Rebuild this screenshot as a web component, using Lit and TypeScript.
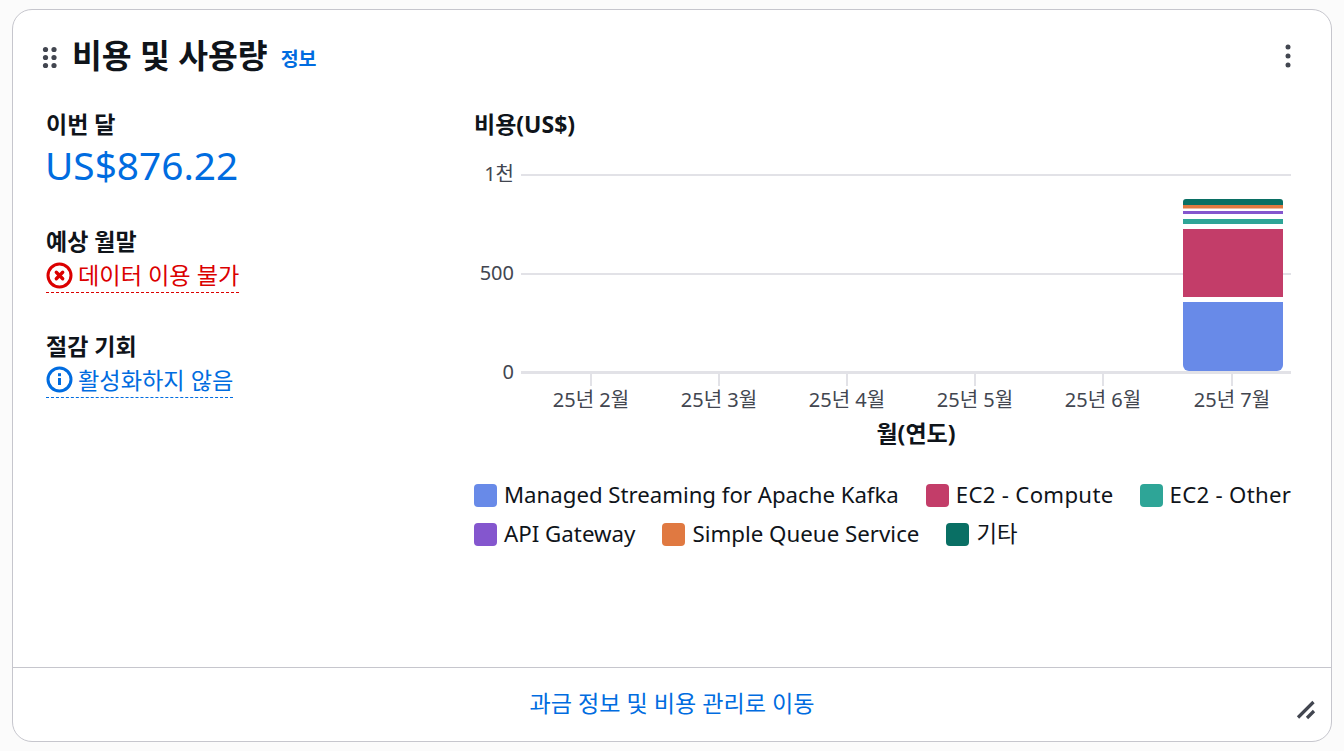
import { LitElement, html, css, svg } from "lit";
import { customElement } from "lit/decorators.js";

const months = [
  ["25년 2월", 591],
  ["25년 3월", 719],
  ["25년 4월", 847],
  ["25년 5월", 975],
  ["25년 6월", 1103],
  ["25년 7월", 1232],
] as const;

const legend = [
  [["Managed Streaming for Apache Kafka", "#688ae8"], ["EC2 - Compute", "#c33d69"], ["EC2 - Other", "#2ea597"]],
  [["API Gateway", "#8456ce"], ["Simple Queue Service", "#e07941"], ["기타", "#096f64"]],
];

@customElement("app-root")
export class AppRoot extends LitElement {
  static styles = css`
    :host {
      display: block;
      width: 1344px;
      height: 751px;
      box-sizing: border-box;
      padding: 9px 12px 9px 12px;
      background: #fbfbfb;
      font-family: "Noto Sans", "Noto Sans CJK KR", sans-serif;
      color: #0f141a;
    }
    .card {
      height: 733px;
      box-sizing: border-box;
      background: #fff;
      border: 1px solid #c6c6cd;
      border-radius: 20px;
      display: flex;
      flex-direction: column;
    }
    .header {
      height: 85px;
      box-sizing: border-box;
      display: flex;
      align-items: flex-start;
      padding: 24px 40px 0 29px;
    }
    .drag { width: 16px; height: 24px; margin-top: 12px; flex: none; }
    h2 {
      margin: 0 0 0 14px;
      font-size: 32.4px;
      line-height: 42px;
      font-weight: 700;
    }
    .info {
      margin: 11px 0 0 13px;
      font-size: 19.5px;
      line-height: 28px;
      font-weight: 700;
      color: #006ce0;
    }
    .more { margin-left: auto; width: 6px; height: 26px; margin-top: 9px; flex: none; }
    .body {
      flex: 1;
      display: flex;
      padding: 0 39px 0 33px;
    }
    .left { width: 428px; flex: none; }
    .label { font-size: 23px; line-height: 30px; font-weight: 700; }
    .amount { font-size: 38.8px; line-height: 50px; color: #006ce0; margin: 1px 0 0 -1px; }
    .stat { margin-bottom: 37px; }
    .stat.first { margin-bottom: 36px; padding-top: 14px; }
    .status {
      display: inline-flex;
      align-items: center;
      gap: 5px;
      font-size: 23.2px;
      line-height: 34px;
      border-bottom: 1px dashed currentColor;
      margin-top: 2px;
    }
    .status svg { width: 27px; height: 27px; flex: none; }
    .red { color: #db0000; }
    .blue { color: #006ce0; }
    .right { flex: 1; min-width: 0; padding-top: 14px; }
    .chart-svg { display: block; width: 817px; height: 341px; overflow: visible; }
    .tick { font-size: 20px; fill: #424650; }
    .xt { text-anchor: middle; }
    .yt { text-anchor: end; }
    .xlabel { font-size: 23px; font-weight: 700; fill: #0f141a; text-anchor: middle; }
    .legend { display: flex; flex-direction: column; gap: 9px; }
    .legend-row { display: flex; gap: 27px; white-space: nowrap; }
    .item { display: flex; align-items: center; gap: 7px; font-size: 22.3px; line-height: 30px; }
    .swatch { width: 23px; height: 23px; border-radius: 4px; flex: none; }
    .legend-row:first-child { gap: 26px; }
    .legend-row:first-child .item { font-size: 22.2px; }
    .legend-row:first-child .item:first-child { margin-right: 1px; }
    .legend-row:first-child .item:nth-child(2) { letter-spacing: 0.3px; }
    .legend-row:first-child .item:nth-child(3) { letter-spacing: 0.3px; }
    .footer {
      height: 74px;
      flex: none;
      box-sizing: border-box;
      border-top: 1px solid #c6c6cd;
      padding-bottom: 6px;
      position: relative;
      display: flex;
      align-items: center;
      justify-content: center;
      font-size: 23.1px;
      color: #006ce0;
    }
    .resize { position: absolute; right: 14px; bottom: 20px; width: 22px; height: 22px; }
  `;

  private chart() {
    const ox = 474, oy = 139;
    const X = (x: number) => x - ox;
    const Y = (y: number) => y - oy;
    return html`<svg class="chart-svg" viewBox="0 0 817 341">
      ${svg`
        <line x1=${X(521)} x2="817" y1=${Y(175)} y2=${Y(175)} stroke="#e2e2e7" stroke-width="2"/>
        <line x1=${X(521)} x2="817" y1=${Y(274)} y2=${Y(274)} stroke="#e2e2e7" stroke-width="2"/>
        <line x1=${X(521)} x2="817" y1=${Y(372.5)} y2=${Y(372.5)} stroke="#e2e2e7" stroke-width="3"/>
        <text class="tick yt" x=${X(514)} y=${Y(181)}>1천</text>
        <text class="tick yt" x=${X(514)} y=${Y(280)}>500</text>
        <text class="tick yt" x=${X(514)} y=${Y(379)}>0</text>
        ${months.map(([t, x]) => svg`
          <line x1=${X(x)} x2=${X(x)} y1=${Y(374)} y2=${Y(386)} stroke="#e2e2e7" stroke-width="2"/>
          <text class="tick xt" x=${X(x)} y=${Y(407)}>${t}</text>
        `)}
        <text class="xlabel" x=${X(916)} y=${Y(442)}>월(연도)</text>
        <path d=${`M${X(1183)} ${Y(302)}h100v63a6 6 0 0 1-6 6h-88a6 6 0 0 1-6-6z`} fill="#688ae8"/>
        <rect x=${X(1183)} y=${Y(229)} width="100" height=${68} fill="#c33d69"/>
        <rect x=${X(1183)} y=${Y(219)} width="100" height="5" fill="#2ea597"/>
        <rect x=${X(1183)} y=${Y(211)} width="100" height="3" fill="#8456ce"/>
        <rect x=${X(1183)} y=${Y(205)} width="100" height="3.5" fill="#e07941"/>
        <path d=${`M${X(1183)} ${Y(205)}v-3a3 3 0 0 1 3-3h94a3 3 0 0 1 3 3v3z`} fill="#096f64"/>
      `}
    </svg>`;
  }

  render() {
    return html`<div class="card">
      <div class="header">
        <svg class="drag" viewBox="0 0 16 24" fill="#424650">
          ${[0, 1].map((c) => [0, 1, 2].map((r) => svg`<circle cx=${3.5 + c * 8.5} cy=${3.5 + r * 8} r="2.6"/>`))}
        </svg>
        <h2>비용 및 사용량</h2>
        <span class="info">정보</span>
        <svg class="more" viewBox="0 0 6 26" fill="#424650">
          <circle cx="3" cy="4" r="2.5"/><circle cx="3" cy="13" r="2.5"/><circle cx="3" cy="22" r="2.5"/>
        </svg>
      </div>
      <div class="body">
        <div class="left">
          <div class="stat first">
            <div class="label">이번 달</div>
            <div class="amount">US$876.22</div>
          </div>
          <div class="stat">
            <div class="label">예상 월말</div>
            <div class="status red">
              <svg viewBox="0 0 27 27" fill="none" stroke="currentColor">
                <circle cx="13.5" cy="13.5" r="11.5" stroke-width="3"/>
                <path d="M10.3 10.3l6.4 6.4M16.7 10.3l-6.4 6.4" stroke-width="3.4" stroke-linecap="round"/>
              </svg>
              데이터 이용 불가
            </div>
          </div>
          <div class="stat">
            <div class="label">절감 기회</div>
            <div class="status blue">
              <svg viewBox="0 0 27 27" fill="none" stroke="currentColor">
                <circle cx="13.5" cy="13.5" r="11.5" stroke-width="3"/>
                <path d="M13.5 12v7" stroke-width="3"/>
                <path d="M13.5 7.2v3" stroke-width="3"/>
              </svg>
              활성화하지 않음
            </div>
          </div>
        </div>
        <div class="right">
          <div class="label">비용(US$)</div>
          ${this.chart()}
          <div class="legend">
            ${legend.map((row) => html`<div class="legend-row">
              ${row.map(([t, c]) => html`<div class="item"><span class="swatch" style="background:${c}"></span>${t}</div>`)}
            </div>`)}
          </div>
        </div>
      </div>
      <div class="footer">
        과금 정보 및 비용 관리로 이동
        <svg class="resize" viewBox="0 0 22 22" stroke="#424650" stroke-width="3.2" fill="none">
          <path d="M3 18.5L18.5 3M12 19L19 12" />
        </svg>
      </div>
    </div>`;
  }
}
